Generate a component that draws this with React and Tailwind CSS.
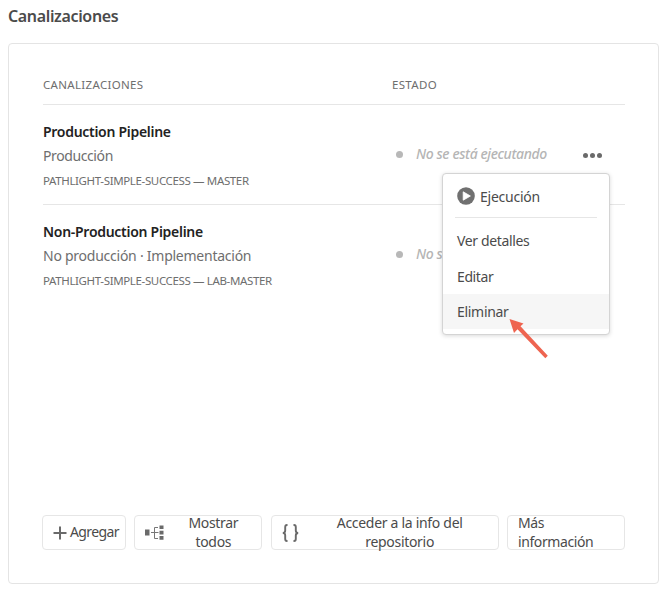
import React from "react";

const pipelines = [
  { name: "Production Pipeline", kind: "Producción", repo: "PATHLIGHT-SIMPLE-SUCCESS — MASTER", nameCls: "tracking-[-0.29px]", kindCls: "tracking-[-0.4px]" },
  { name: "Non-Production Pipeline", kind: "No producción · Implementación", repo: "PATHLIGHT-SIMPLE-SUCCESS — LAB-MASTER", nameCls: "tracking-[-0.28px]", kindCls: "tracking-[-0.25px]" },
];

function PlayIcon() {
  return (
    <svg width="18" height="18" viewBox="0 0 18 18" className="shrink-0">
      <circle cx="9" cy="9" r="8.8" fill="#707070" />
      <path d="M6.2 4.8v8.4l7.2-4.2z" fill="#fff" stroke="#fff" strokeWidth="0.8" strokeLinejoin="round" />
    </svg>
  );
}

function TreeIcon() {
  return (
    <svg width="19" height="16" viewBox="0 0 19 16" className="shrink-0">
      <path d="M0 4.500h4.500v6H0zM14.500.500h4v3.600h-4zM14.500 5.800h4v3.600h-4zM14.500 11.100h4v3.600h-4z" fill="#6a6a6a" />
      <path d="M6 7.500h7.500M13 2.500H9.500v11H13" fill="none" stroke="#777" />
    </svg>
  );
}

function BracesIcon() {
  return (
    <svg width="17" height="18" viewBox="0 0 17 18" className="shrink-0" fill="none" stroke="#6a6a6a" strokeWidth="1.9">
      <path d="M5.5 1H5Q3.200 1 3.200 3v3.500Q3.200 9 .8 9 3.200 9 3.200 11.500v3.500q0 2 1.800 2h.5M11.500 1h.5q1.800 0 1.800 2v3.500Q13.800 9 16.200 9 13.800 9 13.800 11.500v3.500q0 2-1.800 2h-.5" />
    </svg>
  );
}

function Row({ item, last }) {
  return (
    <div className={last ? "flex h-[100px]" : "flex h-[100px] border-b border-[#e6e6e6]"}>
      <div className="w-[349px] pt-[17px] text-[#6e6e6e] whitespace-nowrap">
        <div className={"text-[14px] leading-5 font-semibold text-[#222] " + item.nameCls}>{item.name}</div>
        <div className={"mt-1 text-[14px] leading-5 " + item.kindCls}>{item.kind}</div>
        <div className="mt-[5px] text-[11.5px] leading-5 tracking-[-0.36px]">{item.repo}</div>
      </div>
      <div className="flex h-[99px] items-center pl-1">
        <span className="size-[7px] rounded-full bg-[#b8b8b8]" />
        <span className="-mt-[2px] ml-[13px] w-[155px] text-[14px] leading-5 italic font-medium tracking-[-0.4px] text-[#b5b5b5] whitespace-nowrap">No se está ejecutando</span>
        {!last && (
          <span className="mt-[1px] ml-3 flex gap-[2px]">
            <i className="size-[5px] rounded-full bg-[#6a6a6a]" />
            <i className="size-[5px] rounded-full bg-[#6a6a6a]" />
            <i className="size-[5px] rounded-full bg-[#6a6a6a]" />
          </span>
        )}
      </div>
    </div>
  );
}

const button = "flex h-[35px] items-center rounded-[4px] border border-[#e6e6e6] bg-white text-[14px] leading-[18.5px] text-[#4b4b4b] whitespace-nowrap";

export default function App() {
  return (
    <div className="relative h-[605px] w-[666px] overflow-hidden bg-white pt-[5px] pl-2 font-['Noto_Sans',sans-serif]">
      <h1 className="text-[16px] leading-[22px] font-semibold tracking-[-0.35px] text-[#4b4b4b]">Canalizaciones</h1>
      <section className="mt-4 flex h-[541px] w-[651px] flex-col rounded-[4px] border border-[#e4e4e4] pr-[33px] pl-[34px]">
        <div className="flex h-[61px] border-b border-[#e6e6e6] pt-[31px] text-[11.5px] leading-5 text-[#6e6e6e]">
          <span className="w-[349px] tracking-[0.32px]">CANALIZACIONES</span>
          <span className="tracking-[0.32px]">ESTADO</span>
        </div>
        <Row item={pipelines[0]} />
        <Row item={pipelines[1]} last />
        <div className="mt-auto mb-[33px] -ml-px flex w-[583px] justify-between">
          <button className={button + " w-[84px] pl-[10px]"}>
            <svg width="14" height="14" viewBox="0 0 14 14" stroke="#6a6a6a" strokeWidth="2"><path d="M7 .5v13M.5 7h13" /></svg>
            <span className="ml-[3px] tracking-[-0.6px]">Agregar</span>
          </button>
          <button className={button + " w-[128px] pl-[10px]"}>
            <TreeIcon />
            <span className="ml-[21px] w-[56px] text-center tracking-[-0.35px]">Mostrar<br />todos</span>
          </button>
          <button className={button + " w-[228px] pl-[10px]"}>
            <BracesIcon />
            <span className="ml-[36px] w-[130px] text-center tracking-[-0.3px]">Acceder a la info del<br />repositorio</span>
          </button>
          <button className={button + " w-[118px] pl-[10px] text-left"}>
            <span className="tracking-[-0.4px]">Más<br />información</span>
          </button>
        </div>
      </section>

      <div className="absolute top-[173px] left-[442px] h-[162px] w-[168px] rounded-[4px] border-[1.5px] border-[#d4d4d4] bg-white text-[14px] text-[#4b4b4b] shadow-[0_1px_4px_rgba(0,0,0,0.15)]">
        <div className="mx-[12px] flex h-[44px] items-center border-b border-[#e6e6e6] pt-px pl-[2px]">
          <PlayIcon />
          <span className="ml-[5px] tracking-[-0.25px]">Ejecución</span>
        </div>
        <div className="mt-[4px] flex h-9 items-center pl-[14px] tracking-[-0.35px]">Ver detalles</div>
        <div className="mt-px flex h-[35px] items-center pl-[14px] tracking-[-0.4px]">Editar</div>
        <div className="flex h-[35px] items-center bg-[#f6f6f6] pl-[14px] tracking-[-0.3px]">Eliminar</div>
      </div>
      <svg className="absolute top-[316px] left-[506px]" width="44" height="44" viewBox="0 0 44 44">
        <path d="M3.500 3 17.500 7.500 14.500 10.300 41.800 39.800 39.300 42.300 11.500 13.200 8 17Z" fill="#ee6450" />
      </svg>
    </div>
  );
}
